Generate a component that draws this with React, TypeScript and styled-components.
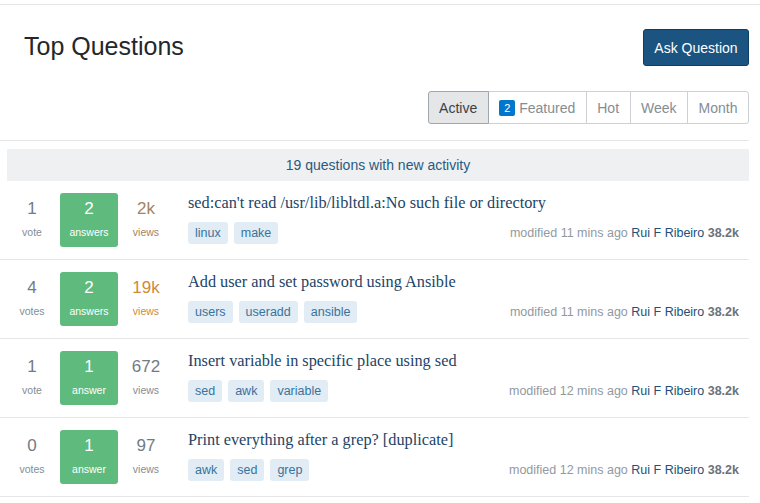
import styled, { createGlobalStyle } from "styled-components";

const GlobalStyle = createGlobalStyle`
  html, body {
    margin: 0;
    padding: 0;
    background: #fff;
  }
  body {
    font-family: "Liberation Sans", Arial, sans-serif;
  }
`;

const Page = styled.div`
  padding-top: 4px;
`;

const Main = styled.div`
  border-top: 1px solid #e4e6e8;
`;

const Content = styled.div`
  width: 749px;
`;

const Header = styled.div`
  display: flex;
  justify-content: space-between;
  align-items: flex-start;
  padding: 24px 0 0 24px;
`;

const Title = styled.h1`
  margin: 0;
  font-size: 25px;
  font-weight: 400;
  line-height: 34px;
  color: #242729;
`;

const AskButton = styled.button`
  width: 106px;
  height: 37px;
  padding: 0;
  border: 1px solid #0f3e63;
  border-radius: 3px;
  background: #1b5381;
  color: #fff;
  font-family: inherit;
  font-size: 14px;
  cursor: pointer;
`;

const FilterRow = styled.div`
  display: flex;
  justify-content: flex-end;
  margin-top: 25px;
  padding-bottom: 16px;
  border-bottom: 1px solid #e4e6e8;
`;

const Tabs = styled.div`
  display: flex;
`;

const Tab = styled.div<{ $active?: boolean }>`
  display: flex;
  align-items: center;
  height: 33px;
  box-sizing: border-box;
  padding: 0 10.5px;
  margin-left: -1px;
  border: 1px solid ${(p) => (p.$active ? "#9fa6ad" : "#cdd1d5")};
  background: ${(p) => (p.$active ? "#e4e6e8" : "#fff")};
  color: ${(p) => (p.$active ? "#3b4045" : "#848d95")};
  font-size: 14px;
  position: relative;
  z-index: ${(p) => (p.$active ? 1 : 0)};

  &:first-child {
    border-radius: 3px 0 0 3px;
  }
  &:last-child {
    border-radius: 0 3px 3px 0;
  }
`;

const Badge = styled.span`
  display: inline-flex;
  align-items: center;
  justify-content: center;
  width: 16px;
  height: 16px;
  margin-right: 4px;
  border-radius: 2px;
  background: #0077cc;
  color: #fff;
  font-size: 11px;
`;

const Notice = styled.div`
  display: flex;
  align-items: center;
  justify-content: center;
  height: 32px;
  margin: 8px 0 0 7px;
  background: #eff0f1;
  color: #2b5a80;
  font-size: 14px;
`;

const Row = styled.div`
  display: flex;
  padding: 12px 10px 12px 0;
  border-bottom: 1px solid #e4e6e8;
`;

const Stats = styled.div`
  display: flex;
  gap: 4px;
  padding-left: 8px;
  margin-right: 18px;
`;

const Stat = styled.div<{ $tone?: string }>`
  display: flex;
  flex-direction: column;
  align-items: center;
  width: 48px;
  height: 54px;
  box-sizing: border-box;
  padding-top: 5px;
  color: ${(p) => p.$tone || "#737b83"};
`;

const Answered = styled(Stat)`
  width: 58px;
  border-radius: 3px;
  background: #5eba7d;
  color: #fff;
`;

const Count = styled.div`
  font-size: 17px;
  line-height: 22px;
`;

const Label = styled.div<{ $tone?: string }>`
  margin-top: 5px;
  font-size: 10.5px;
  line-height: 14px;
  color: ${(p) => p.$tone || "inherit"};
`;

const Summary = styled.div`
  flex: 1;
  display: flex;
  flex-direction: column;
`;

const QuestionLink = styled.a`
  font-family: "Liberation Serif", "Times New Roman", serif;
  font-size: 16.3px;
  line-height: 20px;
  color: #1d4466;
  text-decoration: none;
`;

const Bottom = styled.div`
  display: flex;
  justify-content: space-between;
  align-items: center;
  margin-top: 9px;
`;

const TagList = styled.div`
  display: flex;
  gap: 6px;
`;

const Tag = styled.span`
  display: inline-flex;
  align-items: center;
  height: 22px;
  padding: 0 7px;
  border-radius: 3px;
  background: #e1ecf4;
  color: #39739d;
  font-size: 12.5px;
`;

const Meta = styled.div`
  font-size: 12.5px;
  color: #9199a1;
  white-space: nowrap;
`;

const User = styled.a`
  color: #245078;
  text-decoration: none;
`;

const Rep = styled.b`
  color: #6a737c;
`;

type Question = {
  votes: number;
  answers: number;
  views: string;
  viewTone?: string;
  title: string;
  tags: string[];
  time: string;
};

const questions: Question[] = [
  {
    votes: 1,
    answers: 2,
    views: "2k",
    viewTone: "#a3845f",
    title: "sed:can't read /usr/lib/libltdl.a:No such file or directory",
    tags: ["linux", "make"],
    time: "11 mins ago",
  },
  {
    votes: 4,
    answers: 2,
    views: "19k",
    viewTone: "#cf8a3a",
    title: "Add user and set password using Ansible",
    tags: ["users", "useradd", "ansible"],
    time: "11 mins ago",
  },
  {
    votes: 1,
    answers: 1,
    views: "672",
    title: "Insert variable in specific place using sed",
    tags: ["sed", "awk", "variable"],
    time: "12 mins ago",
  },
  {
    votes: 0,
    answers: 1,
    views: "97",
    title: "Print everything after a grep? [duplicate]",
    tags: ["awk", "sed", "grep"],
    time: "12 mins ago",
  },
];

const tabs = ["Active", "Featured", "Hot", "Week", "Month"];

export default function App() {
  return (
    <Page>
      <GlobalStyle />
      <Main>
        <Content>
          <Header>
            <Title>Top Questions</Title>
            <AskButton>Ask Question</AskButton>
          </Header>
          <FilterRow>
            <Tabs>
              {tabs.map((t) => (
                <Tab key={t} $active={t === "Active"}>
                  {t === "Featured" && <Badge>2</Badge>}
                  {t}
                </Tab>
              ))}
            </Tabs>
          </FilterRow>
          <Notice>19 questions with new activity</Notice>
          {questions.map((q, i) => (
            <Row key={i}>
              <Stats>
                <Stat>
                  <Count>{q.votes}</Count>
                  <Label $tone="#848d95">{q.votes === 1 ? "vote" : "votes"}</Label>
                </Stat>
                <Answered>
                  <Count>{q.answers}</Count>
                  <Label>{q.answers === 1 ? "answer" : "answers"}</Label>
                </Answered>
                <Stat $tone={q.viewTone}>
                  <Count>{q.views}</Count>
                  <Label $tone={q.viewTone ? undefined : "#848d95"}>views</Label>
                </Stat>
              </Stats>
              <Summary>
                <QuestionLink href="#">{q.title}</QuestionLink>
                <Bottom>
                  <TagList>
                    {q.tags.map((t) => (
                      <Tag key={t}>{t}</Tag>
                    ))}
                  </TagList>
                  <Meta>
                    modified {q.time} <User href="#">Rui F Ribeiro</User>{" "}
                    <Rep>38.2k</Rep>
                  </Meta>
                </Bottom>
              </Summary>
            </Row>
          ))}
        </Content>
      </Main>
    </Page>
  );
}
